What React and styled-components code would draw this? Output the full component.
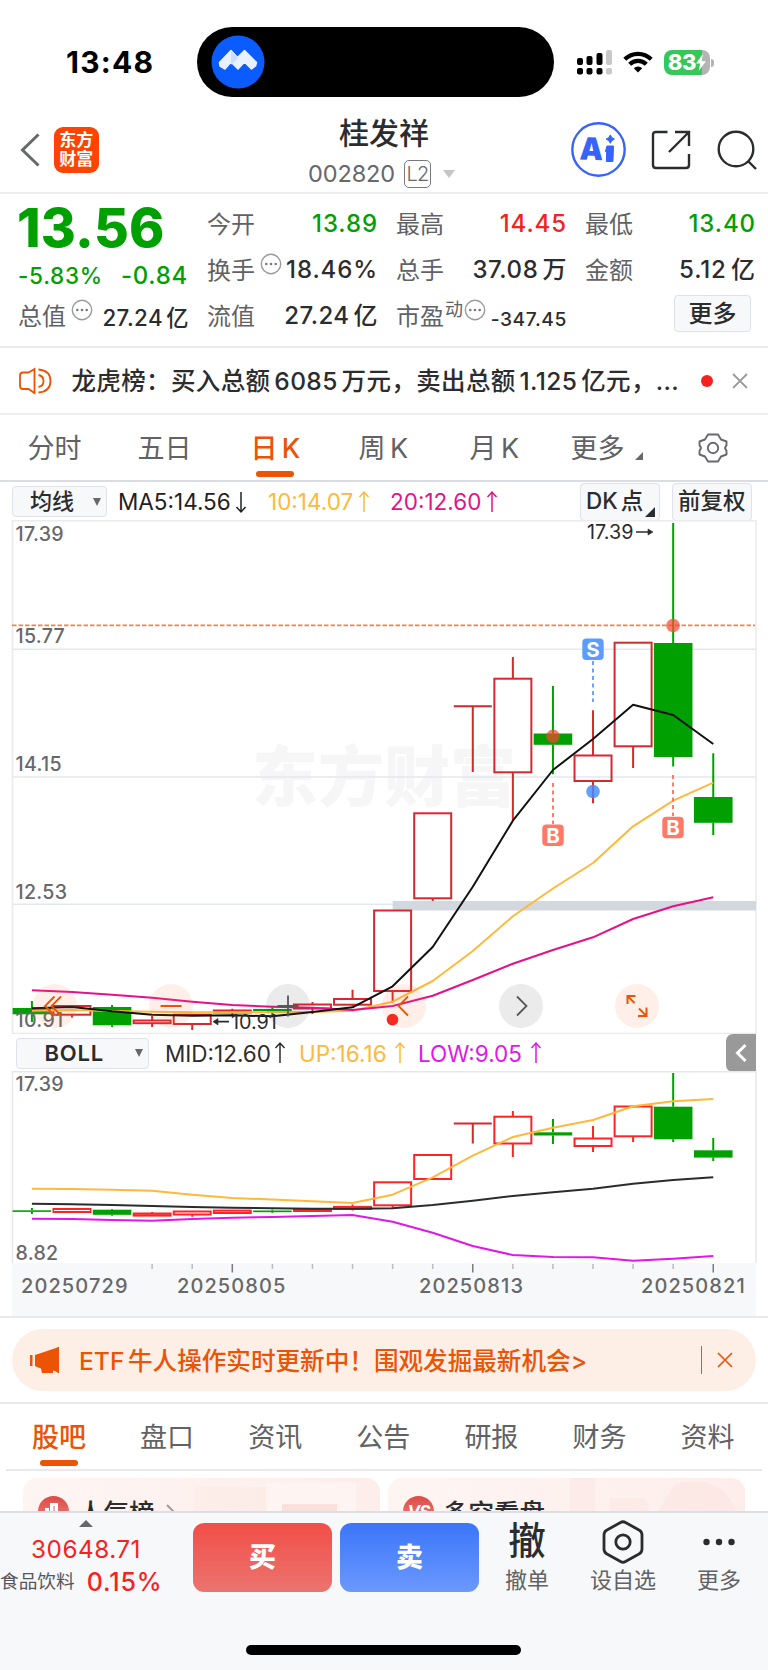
import styled, { createGlobalStyle } from 'styled-components'

const GlobalStyle = createGlobalStyle`
  * {
    box-sizing: border-box;
  }

  body {
    margin: 0;
    background: #fff;
    font-family: Inter, 'Noto Sans CJK SC', sans-serif;
    color: #2b2c2e;
  }
`

const GREEN = '#00a000'
const RED = '#f62222'
const ORANGE = '#ea5404'
const YELLOW = '#ffb83a'
const PINK = '#e4118a'
const PURPLE = '#e017e8'

const Screen = styled.div`
  width: 768px;
  height: 1670px;
  display: flex;
  flex-direction: column;
  overflow: hidden;
  background: #fff;
  word-spacing: -3px;
`

/* ---------- status bar ---------- */

const StatusBar = styled.div`
  height: 98px;
  flex: none;
  display: flex;
  align-items: center;
  padding: 26px 54px 0 66px;
`

const Clock = styled.div`
  width: 131px;
  font-size: 30px;
  font-weight: 700;
  letter-spacing: 1.2px;
  color: #000;
`

const Island = styled.div`
  width: 357px;
  height: 70px;
  border-radius: 35px;
  background: #000;
  padding: 8px 14px;
`

const StatusIcons = styled.div`
  display: flex;
  align-items: center;
  margin-left: 23px;
  gap: 11px;
`

const Battery = styled.div`
  display: flex;
  align-items: center;
  justify-content: center;
  width: 46px;
  height: 25px;
  border-radius: 8px;
  background: linear-gradient(to right, #34c759 83%, #b4b4b4 83%);
  color: #fff;
  font-size: 22px;
  font-weight: 800;
  letter-spacing: -0.3px;
  position: relative;

  &::after {
    content: '';
    position: absolute;
    right: -4px;
    top: 9px;
    width: 3px;
    height: 8px;
    border-radius: 0 3px 3px 0;
    background: #b4b4b4;
  }
`

/* ---------- header ---------- */

const Header = styled.header`
  height: 96px;
  flex: none;
  display: grid;
  grid-template-columns: 300px 168px 300px;
  border-bottom: 2px solid #ededef;
`

const HeaderLeft = styled.div`
  display: flex;
  align-items: center;
  padding: 9px 0 0 20px;
  gap: 13.5px;
`

const Logo = styled.div`
  width: 45.5px;
  height: 46px;
  border-radius: 9px;
  background: #ff4400;
  color: #fff;
  font-size: 17px;
  font-weight: 700;
  line-height: 19px;
  text-align: center;
  padding-top: 4px;
`

const Title = styled.div`
  padding-top: 14px;
  text-align: center;
  font-size: 30px;
  font-weight: 500;
  line-height: 42px;
  white-space: nowrap;
`

const Code = styled.div`
  display: flex;
  align-items: center;
  padding-left: 8px;
  height: 29px;
  margin-top: 5px;
  font-size: 23.5px;
  line-height: 29px;
  letter-spacing: -0.1px;
  color: #66686b;
`

const Level = styled.span`
  width: 27px;
  height: 28px;
  margin: 0 12px 0 9px;
  border: 1.5px solid #77797c;
  border-radius: 5px;
  font-size: 20px;
  line-height: 26px;
  text-align: center;
  font-weight: 300;
  letter-spacing: -0.8px;
`

const HeaderRight = styled.div`
  display: flex;
  align-items: center;
  justify-content: flex-end;
  padding: 9px 9px 0 0;
`

/* ---------- quote ---------- */

const Quote = styled.section`
  height: 154px;
  flex: none;
  display: grid;
  grid-template-columns: repeat(4, 170px);
  grid-template-rows: repeat(3, 46px);
  column-gap: 19px;
  padding: 6.5px 0 0 18px;
  border-bottom: 2px solid #e9eaee;
`

const Price = styled.div`
  margin-left: -1px;
  font-size: 53.5px;
  font-weight: 800;
  line-height: 53px;
  letter-spacing: 0.2px;
  color: ${GREEN};
`

const Change = styled.div`
  display: flex;
  align-items: center;
  justify-content: space-between;
  padding-top: 12px;
  font-weight: 500;
  font-size: 24px;
  letter-spacing: 0.7px;
  color: ${GREEN};

  span:first-child {
    font-size: 22.5px;
  }
`

const Stat = styled.div`
  display: flex;
  align-items: center;
  white-space: nowrap;
`

const StatLabel = styled.span`
  font-size: 24px;
  line-height: 34px;
  padding-top: 2px;
  color: #606265;
`

const StatValue = styled.span`
  margin-left: auto;
  margin-right: -1px;
  font-size: ${(p) => p.$size || 24}px;
  font-weight: 500;
  line-height: 34px;
  letter-spacing: ${(p) => p.$track || 0.9}px;
  padding-top: ${(p) => p.$drop || 1}px;
  color: ${(p) => p.$color || '#2b2c2e'};
`

const Dynamic = styled.span`
  font-size: 18px;
  color: #606265;
  margin: -16px -4px 0 1px;
`

const MoreButton = styled.button`
  width: 77px;
  height: 37px;
  margin-left: auto;
  margin-right: 4px;
  margin-top: -4px;
  padding: 0;
  border: 1.5px solid #dfe1e8;
  border-radius: 4px;
  background: #f7f8fa;
  font: 500 24px / 33px Inter, 'Noto Sans CJK SC', sans-serif;
  color: #2b2c2e;
`

/* ---------- news ---------- */

const News = styled.div`
  height: 67px;
  flex: none;
  display: flex;
  align-items: center;
  padding: 0 20px 0 19px;
  border-bottom: 2px solid #ededf0;
`

const NewsText = styled.div`
  width: 612px;
  flex: none;
  margin-left: 19.5px;
  padding-bottom: 2px;
  font-size: 24.5px;
  font-weight: 500;
  letter-spacing: 0.37px;
  white-space: nowrap;
`

const Dot = styled.i`
  width: 12px;
  height: 12px;
  margin-right: 19.5px;
  margin-left: auto;
  border-radius: 50%;
  background: ${RED};
`

const Close = styled.svg`
  flex: none;
`

/* ---------- tabs ---------- */

const PeriodTabs = styled.nav`
  height: 67px;
  flex: none;
  display: flex;
  padding-left: 27.5px;
  border-bottom: 2px solid #d9dce3;
`

const Tab = styled.div`
  width: ${(p) => p.$width}px;
  flex: none;
  display: flex;
  flex-direction: column;
  align-items: flex-start;
  font-size: 27px;
  line-height: 40px;
  font-weight: ${(p) => (p.$active ? 500 : 400)};
  color: ${(p) => (p.$active ? ORANGE : '#606265')};
  padding-top: ${(p) => p.$top}px;
  white-space: nowrap;

  span::after {
    content: '';
    display: ${(p) => (p.$active ? 'block' : 'none')};
    width: 38px;
    height: 6px;
    margin: ${(p) => p.$gap}px auto 0;
    border-radius: 3px;
    background: ${ORANGE};
  }
`

const TabCorner = styled.i`
  display: inline-block;
  margin-left: 10px;
  border-left: 8px solid transparent;
  border-bottom: 8px solid #66686b;
  transform: translateY(2px);
`

const GearSlot = styled.div`
  padding-top: 17px;
`

/* ---------- indicators ---------- */

const Indicators = styled.div`
  height: ${(p) => p.$height}px;
  flex: none;
  display: flex;
  align-items: center;
  padding: 1px ${(p) => p.$right}px 0 ${(p) => p.$left}px;
`

const Picker = styled.div`
  display: flex;
  align-items: center;
  justify-content: flex-end;
  width: ${(p) => p.$width}px;
  height: 31px;
  padding-right: 5px;
  gap: ${(p) => p.$gap}px;
  border: 1.5px solid #dfe2e8;
  border-radius: 4px;
  background: #f7f8fa;
  font-size: 22px;
  font-weight: ${(p) => p.$weight || 500};
  line-height: 29px;
  letter-spacing: ${(p) => p.$track || 0}px;
`

const Caret = styled.i`
  border: 4.5px solid transparent;
  border-top: 8px solid ${(p) => p.$color || '#66686b'};
  border-bottom: 0;
  border-left-width: ${(p) => p.$half || 4.5}px;
  border-right-width: ${(p) => p.$half || 4.5}px;
`

const Reading = styled.div`
  display: flex;
  align-items: center;
  width: ${(p) => p.$width}px;
  margin-left: ${(p) => p.$gap}px;
  flex: none;
  font-size: 22.5px;
  color: ${(p) => p.$color};

  svg {
    margin-left: auto;
  }
`

const SideButton = styled.div`
  position: relative;
  width: 80px;
  height: 38px;
  margin-left: ${(p) => p.$left};
  border: 1.5px solid #dfe2e8;
  border-radius: 4px;
  background: #f7f8fa;
  font-size: 22.5px;
  font-weight: 500;
  line-height: 34px;
  padding-left: 5px;
  white-space: nowrap;
`

const SideCorner = styled.i`
  position: absolute;
  right: 4px;
  bottom: 3px;
  border-left: 10px solid transparent;
  border-bottom: 10px solid #2b2c2e;
`

const Collapse = styled.div`
  width: 30px;
  height: 38px;
  margin-left: auto;
  border-radius: 7px 0 0 7px;
  background: #999;
  display: flex;
  align-items: center;
  justify-content: center;
`

/* ---------- charts ---------- */

const ChartArea = styled.div`
  position: relative;
  flex: none;
  height: ${(p) => p.$height}px;

  svg {
    display: block;
  }
`

const ChartControls = styled.div`
  position: absolute;
  left: 33px;
  top: 464px;
  display: flex;
  gap: 72.4px;
`

const RoundControl = styled.div`
  width: 44px;
  height: 44px;
  border-radius: 50%;
  background: ${(p) => (p.$gray ? 'rgba(60, 60, 60, 0.1)' : 'rgba(255, 110, 50, 0.11)')};
`

const Dates = styled.div`
  height: 53px;
  flex: none;
  margin: 0 12px;
  background: #f7f8fa;
`

const Divider = styled.div`
  height: 2px;
  flex: none;
  margin: 0 ${(p) => p.$inset || 0}px;
  background: #e8e9ed;
`

/* ---------- banner, lower tabs ---------- */

const Banner = styled.div`
  height: 62px;
  flex: none;
  margin: 11px 12px;
  padding: 0 23px 0 18px;
  border-radius: 31px;
  background: #fdeee6;
  color: ${ORANGE};
  display: flex;
  align-items: center;
`

const BannerText = styled.div`
  margin-left: 19px;
  padding-bottom: 3px;
  flex: 1;
  font-size: 24.6px;
  font-weight: 500;
  white-space: nowrap;
`

const BannerRule = styled.i`
  width: 1.5px;
  height: 28px;
  margin-right: 15px;
  background: ${ORANGE};
`

const InfoTabs = styled.nav`
  height: 65px;
  flex: none;
  display: flex;
  padding-left: 32px;
`

const Cards = styled.div`
  height: 40px;
  flex: none;
  overflow: hidden;
  display: flex;
  gap: 8px;
  padding: 7px 23px 0;
`

const Card = styled.div`
  width: 357px;
  height: 100px;
  border-radius: 14px;
  background: linear-gradient(to right, #fef5f2, #fdeeeb);
  overflow: hidden;
  display: flex;
  padding: 15px 0 0 15px;
  font-size: 25.5px;
  font-weight: 500;
  line-height: 40px;
  position: relative;
`

const CardIcon = styled.div`
  width: 31px;
  height: 31px;
  margin: 3px 9px 0 0;
  border-radius: 50%;
  background: linear-gradient(#dd4a45, #ec8b83);
  color: #fff;
  font-size: 17px;
  font-style: italic;
  font-weight: 700;
  line-height: 33px;
  text-align: center;
  letter-spacing: -1px;
`

const CardArt = styled.svg`
  position: absolute;
  right: 0;
  top: 0;
`

const CardArrow = styled.svg`
  margin: 10px 0 0 10px;
`

/* ---------- bottom bar ---------- */

const BottomBar = styled.footer`
  flex: 1;
  display: flex;
  align-items: flex-start;
  border-top: 2px solid #dcdee3;
  background: #f7f8fa;
  position: relative;
`

const Sector = styled.div`
  width: 172px;
  margin-right: 21px;
  display: flex;
  flex-direction: column;
  align-items: center;
  padding-top: 7px;
  color: ${RED};
  font-size: 24.3px;
  line-height: 30px;
  letter-spacing: 0.5px;
`

const SectorUp = styled.i`
  border: 7px solid transparent;
  border-bottom: 7px solid #66686b;
  border-top: 0;
  margin-bottom: 7px;
`

const SectorRow = styled.div`
  width: 172px;
  display: flex;
  align-items: center;
  margin-top: 3px;
  font-size: 25px;
  font-weight: 500;
  gap: 12px;
  letter-spacing: 0.8px;
  white-space: nowrap;

  span {
    font-size: 18.7px;
    font-weight: 400;
    letter-spacing: 0;
    color: #55575a;
  }
`

const TradeButton = styled.button`
  width: 139px;
  height: 69px;
  margin: 10px 8px 0 0;
  padding: 0;
  border: 0;
  border-radius: 11px;
  background: ${(p) => p.$bg};
  color: #fff;
  font: 900 27px / 67px Inter, 'Noto Sans CJK SC', sans-serif;
`

const Action = styled.div`
  width: ${(p) => p.$width}px;
  display: flex;
  flex-direction: column;
  align-items: center;
  font-size: 22px;
  line-height: 32px;
  color: #606265;
  white-space: nowrap;
`

const ActionIcon = styled.div`
  height: 51px;
  display: flex;
  align-items: center;
  padding-top: ${(p) => p.$top ?? 7}px;
  font-size: 37.5px;
  font-weight: 500;
  line-height: 44px;
  color: #2b2c2e;
`

const HomeIndicator = styled.div`
  position: absolute;
  left: 246px;
  bottom: 15px;
  width: 275px;
  height: 10px;
  border-radius: 5px;
  background: #000;
`

/* ---------- data ---------- */

const X0 = 31.9
const STEP = 40.08
const cx = (i) => X0 + STEP * i

// [kind, body top, body bottom, high, low] in chart pixels; kind: 0 down, 1 up, 2 T-shaped
const dayCandles = [
  [0, 1008, 1014.3, 1001, 1022],
  [1, 1006, 1014.7, 1005, 1017.5],
  [0, 1007, 1025.3, 1005, 1027],
  [1, 1020.5, 1023.2, 1016, 1027],
  [1, 1014.7, 1024, 1014, 1030],
  [1, 1010.5, 1012.5, 1008.7, 1015],
  [0, 1009, 1011, 1007.5, 1016],
  [1, 1004.5, 1008.5, 1002, 1014],
  [1, 999, 1004.7, 989.7, 1006],
  [1, 910.5, 991, 910.5, 1002.7],
  [1, 813.3, 898.3, 813.3, 901],
  [2, 706.3, 706.3, 706.3, 772],
  [1, 678.7, 772.3, 657, 820.7],
  [0, 733.5, 744.8, 686, 774.3],
  [1, 755.5, 781, 710.3, 803.3],
  [1, 642.7, 746.3, 642.7, 768],
  [0, 643, 757, 523, 766.5],
  [0, 797, 822.8, 753.3, 835],
]

const bollCandles = [
  [0, 1210.3, 1211.9, 1208, 1214],
  [1, 1209, 1212, 1209, 1212],
  [0, 1209.7, 1214.8, 1209, 1215.7],
  [1, 1213.5, 1215.6, 1212, 1216],
  [1, 1211.5, 1214.5, 1211, 1216.7],
  [1, 1210.6, 1213, 1210, 1213],
  [0, 1210.5, 1212.2, 1209.5, 1213],
  [1, 1209.5, 1211, 1209, 1211],
  [1, 1206.9, 1209, 1204.5, 1210.5],
  [1, 1182.3, 1205.3, 1182.3, 1207.7],
  [1, 1155, 1179, 1155, 1179],
  [2, 1123.5, 1123.5, 1123.5, 1143.5],
  [1, 1116.7, 1143.5, 1111, 1157],
  [0, 1132.3, 1135.5, 1119, 1144],
  [1, 1138.5, 1146, 1126, 1152],
  [1, 1106.5, 1136.3, 1106.5, 1142],
  [0, 1106.7, 1139.3, 1073, 1142],
  [0, 1150.3, 1157.6, 1138, 1161],
]

const ma5 = [1008.3, 1007, 1011.3, 1014.7, 1015.7, 1015.3, 1016.3, 1012, 1007.3, 986.3, 947, 886.7, 820.7, 770, 739, 704.7, 715, 744]
const ma10 = [1010.7, 1010, 1011, 1011.7, 1012.3, 1012.3, 1012, 1012, 1010.7, 1001.7, 981, 951, 916.3, 888.5, 863, 826.3, 800.7, 782.7]
const ma20 = [990.3, 992, 994.7, 997.7, 1001.7, 1005, 1006.7, 1007.7, 1010, 1006, 995.7, 980, 963.7, 950, 937.3, 919, 906.3, 897.3]

const bollUp = [1188.7, 1189, 1189.7, 1190.7, 1194.7, 1198, 1199.5, 1201.3, 1203, 1194.7, 1177.3, 1155.7, 1137, 1127.7, 1120, 1106.3, 1101.3, 1099]
const bollMid = [1203.7, 1204.3, 1205, 1206, 1207, 1207.8, 1208.3, 1208.7, 1208.7, 1208.3, 1205, 1200.7, 1196, 1192.3, 1188.7, 1183.7, 1180, 1177.3]
const bollLow = [1218.7, 1219, 1220, 1220.7, 1219, 1217.7, 1217, 1216, 1215, 1221.7, 1232.7, 1246, 1255, 1257, 1257.3, 1260.7, 1258.7, 1256]

const toPoints = (values) => values.map((y, i) => `${cx(i)},${y}`).join(' ')

/* ---------- pieces ---------- */

const Line = ({ values, color, width = 2 }) => (
  <polyline points={toPoints(values)} fill="none" stroke={color} strokeWidth={width} strokeLinejoin="round" />
)

const Candles = ({ data, red }) =>
  data.map(([kind, top, bottom, high, low], i) => {
    const x = cx(i)
    if (kind === 2) {
      return <path key={i} d={`M${x - 19} ${top}h38M${x} ${top}V${low}`} stroke="#cf2a2e" strokeWidth="2" />
    }
    const color = kind ? red : GREEN
    return (
      <g key={i} stroke={color} strokeWidth="2">
        <path d={`M${x} ${high}V${top}M${x} ${bottom}V${low}`} />
        {kind ? (
          <rect x={x - 18.5} y={top} width="37" height={bottom - top} fill="none" />
        ) : (
          <rect x={x - 19.3} y={top} width="38.6" height={bottom - top} fill={color} stroke="none" />
        )}
      </g>
    )
  })

const Marker = ({ x, y, label, color }) => (
  <g>
    <rect x={x - 10.7} y={y - 10.7} width="21.4" height="21.4" rx="4" fill={color} />
    <text x={x} y={y + 7.3} textAnchor="middle" fontSize="20.5" fontWeight="700" fill="#fff">{label}</text>
  </g>
)

const UpArrow = ({ down }) => (
  <svg width="12" height="24" viewBox="0 0 12 24" fill="none" stroke="currentColor" strokeWidth="1.5">
    <path d={down ? 'M6 2v20M1.5 17 6 22l4.5-5' : 'M6 22V2M1.5 7 6 2l4.5 5'} />
  </svg>
)

const InfoIcon = styled.svg`
  flex: none;
  margin: -11px 0 0 5px;
`

const Info = () => (
  <InfoIcon width="22" height="22" viewBox="0 0 22 22">
    <circle cx="11" cy="11" r="9.7" fill="none" stroke="#999b9e" strokeWidth="1.4" />
    <circle cx="6.3" cy="11" r="1.3" fill="#77797c" />
    <circle cx="11" cy="11" r="1.3" fill="#77797c" />
    <circle cx="15.7" cy="11" r="1.3" fill="#77797c" />
  </InfoIcon>
)

const Cross = ({ color, width = 1.8 }) => (
  <Close width="16" height="16" viewBox="0 0 16 16">
    <path d="M1 1l14 14M15 1 1 15" stroke={color} strokeWidth={width} />
  </Close>
)

const DayChart = () => (
  <ChartArea $height={514}>
    <svg width="768" height="514" viewBox="0 520 768 514">
      <text x="252" y="801" fontSize="66" fontWeight="900" fill="#f6f6f6">东方财富</text>
      <path d="M12 649.2h744M12 777h744M12 904.3h744" stroke="#e3e7ee" strokeWidth="1.5" />
      <rect x="12.5" y="520.7" width="743.5" height="512.8" fill="none" stroke="#ebebee" strokeWidth="1.6" />
      <rect x="392.7" y="901" width="363.3" height="9.5" fill="#d3d7de" />
      <path d="M12 625.3h743" stroke="#f0834a" strokeWidth="1.7" strokeDasharray="4.5 2" />
      <Candles data={dayCandles} red="#d6292d" />
      <Line values={ma10} color={YELLOW} />
      <Line values={ma20} color={PINK} />
      <Line values={ma5} color="#111" />
      <g fontSize="19.6" fontWeight="500" fill="#66686b" letterSpacing="0.3">
        <text x="15.5" y="541">17.39</text>
        <text x="15.5" y="643">15.77</text>
        <text x="15.5" y="771">14.15</text>
        <text x="15.5" y="899">12.53</text>
        <text x="15.5" y="1027">10.91</text>
      </g>
      <g fontSize="19.8" fill="#2b2c2e">
        <text x="587" y="539">17.39</text>
        <text x="231" y="1028.5">10.91</text>
      </g>
      <g stroke="#2b2c2e" strokeWidth="1.7" fill="#2b2c2e">
        <path d="M636 532h15M214 1021.7h15" />
        <path d="M648 529l5 3-5 3zM218 1018.5l-5 3.2 5 3.2z" strokeWidth="0.6" />
      </g>
      <g strokeWidth="1.8" strokeDasharray="4 3.5">
        <path d="M593 661v41" stroke="#5a9cfb" />
        <path d="M553 783v41M673 775v41" stroke="#ff6e5c" />
      </g>
      <circle cx="673" cy="625.5" r="6.8" fill="#ff4633" opacity=".72" />
      <circle cx="553" cy="736.3" r="6.8" fill="#f2462c" opacity=".72" />
      <circle cx="593" cy="791.5" r="6.8" fill="#3f8cff" opacity=".82" />
      <Marker x={593} y={649.3} label="S" color="#5c9dfb" />
      <Marker x={553} y={835.3} label="B" color="#ff7868" />
      <Marker x={673} y={827.5} label="B" color="#ff7868" />
      <circle cx="392.5" cy="1019.6" r="5.8" fill={RED} />
    </svg>
    <ChartControls>
      <RoundControl>
        <svg width="44" height="44" fill="none" stroke={ORANGE} strokeWidth="1.8"><path d="M21.5 12.5 12 22l9.5 9.5M28 12.5 18.5 22l9.5 9.5" /></svg>
      </RoundControl>
      <RoundControl>
        <svg width="44" height="44"><path d="M11.5 22h21" stroke={ORANGE} strokeWidth="2" /></svg>
      </RoundControl>
      <RoundControl $gray>
        <svg width="44" height="44"><path d="M11.5 22h21M22 11.5v21" stroke="#55575a" strokeWidth="1.8" /></svg>
      </RoundControl>
      <RoundControl>
        <svg width="44" height="44" fill="none" stroke={ORANGE} strokeWidth="1.8"><path d="M26 12.5 16.5 22l9.5 9.5" /></svg>
      </RoundControl>
      <RoundControl $gray>
        <svg width="44" height="44" fill="none" stroke="#55575a" strokeWidth="1.8"><path d="M18 12.5 27.5 22 18 31.5" /></svg>
      </RoundControl>
      <RoundControl>
        <svg width="44" height="44" fill="none" stroke={ORANGE} strokeWidth="2"><path d="M12.5 20v-8h8M12.5 12l7 7M31.5 23.5V32H23M31.5 32 24 24.5" /></svg>
      </RoundControl>
    </ChartControls>
  </ChartArea>
)

const BollChart = () => (
  <ChartArea $height={192}>
    <svg width="768" height="192" viewBox="0 1071 768 192">
      <path d="M12.5 1263v-191.3H756V1263" fill="none" stroke="#e6e8ec" strokeWidth="1.5" />
      <Candles data={bollCandles} red="#fb2525" />
      <Line values={bollUp} color={YELLOW} />
      <Line values={bollMid} color="#2b2c2e" />
      <Line values={bollLow} color={PURPLE} />
      <g fontSize="19.6" fontWeight="500" fill="#66686b" letterSpacing="0.3">
        <text x="15.5" y="1090.5">17.39</text>
        <text x="15.5" y="1259.5">8.82</text>
      </g>
    </svg>
  </ChartArea>
)

const bigTicks = [5, 11, 17]

const DateAxis = () => (
  <Dates>
    <svg width="744" height="53" viewBox="12 1263 744 53">
      {dayCandles.map((_, i) =>
        i < 3 ? null : (
          <path
            key={i}
            d={`M${cx(i)} 1264v${bigTicks.includes(i) ? 8.5 : 5}`}
            stroke={bigTicks.includes(i) ? '#77797c' : '#b9bbc0'}
            strokeWidth="1.5"
          />
        )
      )}
      <g fontSize="20" fontWeight="500" fill="#66686b" letterSpacing="1.1">
        <text x="21" y="1293">20250729</text>
        <text x="177" y="1293">20250805</text>
        <text x="419" y="1293">20250813</text>
        <text x="641" y="1293">20250821</text>
      </g>
    </svg>
  </Dates>
)

const periods = [
  ['分时', 110],
  ['五日', 113],
  ['日 K', 108],
  ['周 K', 111],
  ['月 K', 101],
]

const infoTabs = ['股吧', '盘口', '资讯', '公告', '研报', '财务', '资料']

const App = () => (
  <>
    <GlobalStyle />
    <Screen>
      <StatusBar>
        <Clock>13:48</Clock>
        <Island>
          <svg width="54" height="54" viewBox="0 0 54 54">
            <circle cx="27" cy="27" r="26.5" fill="#0a5cff" />
            <path d="M8.500 27.500 20 15.500l6.500 7L33.500 15.500 45.500 27.500l-1 3.500-4 3-7-7-6.500 7-7-7L14 34l-5-3z" fill="#e9f1ff" stroke="#e9f1ff" strokeWidth="1.5" strokeLinejoin="round" />
            <path d="M20 16 27 23 20 30z" fill="#b9d2ff" opacity=".6" />
          </svg>
        </Island>
        <StatusIcons>
          <svg width="35" height="25" viewBox="0 0 35 25">
            <rect x="0" y="8" width="6" height="7" rx="2" />
            <rect x="9.5" y="6" width="6" height="9" rx="2" />
            <rect x="19.5" y="3" width="6" height="12" rx="2" />
            <rect x="29" y="0" width="6" height="15" rx="2" fill="#c8c8c8" />
            <rect x="0" y="18" width="6" height="6.5" rx="2" />
            <rect x="9.5" y="18" width="6" height="6.5" rx="2" />
            <rect x="19.5" y="18" width="6" height="6.5" rx="2" />
            <rect x="29" y="18" width="6" height="6.5" rx="2" fill="#c8c8c8" />
          </svg>
          <svg width="30" height="24" viewBox="0 0 30 24" fill="none" stroke="#000" strokeWidth="4.2">
            <path d="M1.8 9.2a18.8 18.8 0 0 1 26.4 0" />
            <path d="M6.7 14.3a11.8 11.8 0 0 1 16.6 0" />
            <path d="M15 22.5l-4.2-4.2a6 6 0 0 1 8.4 0z" fill="#000" stroke="none" />
          </svg>
          <Battery>
            83
            <svg width="10" height="17" viewBox="0 0 11 19">
              <path d="M7.5 0 0 10.5h4.5L3 19l8-11H6.3z" fill="#fff" />
            </svg>
          </Battery>
        </StatusIcons>
      </StatusBar>

      <Header>
        <HeaderLeft>
          <svg width="20" height="34" viewBox="0 0 20 34">
            <path d="M18.5 1.5 2.5 17l16 15.5" fill="none" stroke="#66686b" strokeWidth="3" />
          </svg>
          <Logo>东方<br />财富</Logo>
        </HeaderLeft>
        <div>
          <Title>桂发祥</Title>
          <Code>
            002820
            <Level>L2</Level>
            <Caret $color="#c4c5c8" $half={6.5} />
          </Code>
        </div>
        <HeaderRight>
          <svg width="55" height="55" viewBox="0 0 55 55">
            <circle cx="27.5" cy="27.5" r="26.2" fill="none" stroke="#3763fb" strokeWidth="2.4" />
            <text x="9" y="38" fontSize="31" fontWeight="900" fill="#3763fb" transform="rotate(2 20 30) scale(.96 1)">A</text>
            <path d="M36 24h6.5l-.6 15.500h-6.500l.2-10h-1.200z" fill="#3763fb" stroke="#3763fb" strokeLinejoin="round" />
            <path d="M39.300 12.900q1 3.200 4.200 4.200-3.200 1-4.200 4.200-1-3.200-4.200-4.200 3.200-1 4.200-4.200z" fill="#3763fb" stroke="#3763fb" />
          </svg>
          <svg width="40" height="40" viewBox="0 0 40 40" fill="none" stroke="#2b2c2e" strokeWidth="2.4" style={{ marginLeft: 25 }}>
            <path d="M16.5 2H5Q2 2 2 5v30q0 3 3 3h30q3 0 3-3V24" />
            <path d="M24 2h14v14M37 3 18 22" />
          </svg>
          <svg width="42" height="40" viewBox="0 0 42 40" fill="none" stroke="#2b2c2e" strokeWidth="2.4" style={{ marginLeft: 26 }}>
            <circle cx="19" cy="19" r="17.3" />
            <path d="m31.5 31.5 7.5 7.5" />
          </svg>
        </HeaderRight>
      </Header>

      <Quote>
        <Price>13.56</Price>
        <Stat><StatLabel>今开</StatLabel><StatValue $color={GREEN}>13.89</StatValue></Stat>
        <Stat><StatLabel>最高</StatLabel><StatValue $color={RED}>14.45</StatValue></Stat>
        <Stat><StatLabel>最低</StatLabel><StatValue $color={GREEN}>13.40</StatValue></Stat>

        <Change><span>-5.83%</span><span>-0.84</span></Change>
        <Stat><StatLabel>换手</StatLabel><Info /><StatValue>18.46%</StatValue></Stat>
        <Stat><StatLabel>总手</StatLabel><StatValue $track={0.6}>37.08 万</StatValue></Stat>
        <Stat><StatLabel>金额</StatLabel><StatValue>5.12 亿</StatValue></Stat>

        <Stat><StatLabel>总值</StatLabel><Info /><StatValue $size={22.3} $track={0.4} $drop={4}>27.24 亿</StatValue></Stat>
        <Stat><StatLabel>流值</StatLabel><StatValue $track={0.5}>27.24 亿</StatValue></Stat>
        <Stat><StatLabel>市盈</StatLabel><Dynamic>动</Dynamic><Info /><StatValue $size={19.2} $track={0.6} $drop={6}>-347.45</StatValue></Stat>
        <Stat><MoreButton>更多</MoreButton></Stat>
      </Quote>

      <News>
        <svg width="33" height="28" viewBox="0 0 33 28" fill="none" stroke={ORANGE} strokeWidth="1.8">
          <path d="M4 5.5h5.5L15.5 2v24l-6-4H4Q1 22 1 19V8.5q0-3 3-3z" />
          <path d="M19.5 8q5 1 5 6t-5 6M19.5 2.5q12 1 12 11.5t-12 11.5" />
        </svg>
        <NewsText>龙虎榜：买入总额 6085 万元，卖出总额 1.125 亿元，...</NewsText>
        <Dot />
        <Cross color="#999b9e" />
      </News>

      <PeriodTabs>
        {periods.map(([label, width]) => (
          <Tab key={label} $width={width} $top={14} $gap={2} $active={label === '日 K'}>
            <span>{label}</span>
          </Tab>
        ))}
        <Tab $width={126} $top={14}>
          <span>更多<TabCorner /></span>
        </Tab>
        <GearSlot>
          <svg width="32" height="32" viewBox="0 0 32 32" fill="none" stroke="#66686b" strokeWidth="1.9">
            <path d="M11 2.5h10l3 5 5.5 2V13L28 16l1.500 3v3.500l-5.500 2-3 5H11l-3-5-5.500-2V19L4 16l-1.500-3V9.500L8 7.500z" strokeLinejoin="round" />
            <circle cx="16" cy="16" r="5.2" />
          </svg>
        </GearSlot>
      </PeriodTabs>

      <Indicators $height={38} $left={12} $right={16}>
        <Picker $width={95} $gap={19}>均线<Caret /></Picker>
        <Reading $width={129} $gap={11} $color="#1f2022">MA5:14.56<UpArrow down /></Reading>
        <Reading $width={102} $gap={21} $color={YELLOW}>10:14.07<UpArrow /></Reading>
        <Reading $width={108} $gap={20} $color={PINK}>20:12.60<UpArrow /></Reading>
        <SideButton $left="auto">DK 点<SideCorner /></SideButton>
        <SideButton $left="12px">前复权</SideButton>
      </Indicators>

      <DayChart />

      <Indicators $height={37} $left={16} $right={12}>
        <Picker $width={133} $gap={31} $weight={600} $track={0.8}>BOLL<Caret /></Picker>
        <Reading $width={121} $gap={16} $color="#2b2c2e">MID:12.60<UpArrow /></Reading>
        <Reading $width={107} $gap={13} $color={YELLOW}>UP:16.16<UpArrow /></Reading>
        <Reading $width={124} $gap={12} $color={PURPLE}>LOW:9.05<UpArrow /></Reading>
        <Collapse>
          <svg width="12" height="20" viewBox="0 0 12 20"><path d="m10.5 2-8 8 8 8" fill="none" stroke="#fff" strokeWidth="3" /></svg>
        </Collapse>
      </Indicators>

      <BollChart />
      <DateAxis />
      <Divider />

      <Banner>
        <svg width="30" height="26" viewBox="0 0 30 26" fill={ORANGE}>
          <path d="M0 8h2.5v11H0zM5 8 26 1l2-1h1v26h-1l-2-1.5-3-1V26H12l-1-4.500L7 20 5 19z" />
        </svg>
        <BannerText>ETF 牛人操作实时更新中！围观发掘最新机会&gt;</BannerText>
        <BannerRule />
        <Cross color={ORANGE} width={1.6} />
      </Banner>
      <Divider />

      <InfoTabs>
        {infoTabs.map((label) => (
          <Tab key={label} $width={108.1} $top={14} $gap={2} $active={label === '股吧'}>
            <span>{label}</span>
          </Tab>
        ))}
      </InfoTabs>
      <Divider $inset={6} />

      <Cards>
        <Card>
          <CardArt width="200" height="50">
            <rect x="14" y="9" width="74" height="41" fill="#fbe3df" opacity=".3" />
            <rect x="86" y="5" width="90" height="45" fill="#fff" opacity=".35" />
            <rect x="102" y="26" width="55" height="24" fill="#fae0dd" />
          </CardArt>
          <CardIcon>
            <svg width="17" height="17" viewBox="0 0 17 17" fill="#fff"><path d="M0 7h4v10H0zM5 2h8v15H9.500V5H8.500v12H5zM14 11h3v6h-3z" /></svg>
          </CardIcon>
          人气榜
          <CardArrow width="12" height="20" viewBox="0 0 12 20"><path d="m2 2 8 8-8 8" fill="none" stroke="#999" strokeWidth="1.8" /></CardArrow>
        </Card>
        <Card>
          <CardArt width="175" height="50" fill="#f9d5d1" opacity=".55">
            <rect width="25" height="50" opacity=".4" />
            <path d="M40 20h35l8 22 22-36q55-14 66 44H40z" opacity=".4" />
          </CardArt>
          <CardIcon>VS</CardIcon>
          多空看盘
        </Card>
      </Cards>

      <BottomBar>
        <Sector>
          <SectorUp />
          30648.71
          <SectorRow><span>食品饮料</span>0.15%</SectorRow>
        </Sector>
        <TradeButton $bg="linear-gradient(#f24e48, #eb746f)">买</TradeButton>
        <TradeButton $bg="linear-gradient(#3b76f9, #6b98fe)">卖</TradeButton>
        <Action $width={80}><ActionIcon $top={4}>撤</ActionIcon>撤单</Action>
        <Action $width={112}>
          <ActionIcon>
            <svg width="42" height="44" viewBox="0 0 42 44" fill="none" stroke="#2b2c2e" strokeWidth="2.8">
              <path d="M18.5 2.5q2.5-1.5 5 0L37 10q3 1.500 3 5v14q0 3.500-3 5l-13.500 7.500q-2.500 1.500-5 0L5 34q-3-1.500-3-5V15q0-3.500 3-5z" />
              <circle cx="21" cy="22" r="7.2" />
            </svg>
          </ActionIcon>
          设自选
        </Action>
        <Action $width={80}>
          <ActionIcon>
            <svg width="34" height="8" viewBox="0 0 34 8" fill="#2b2c2e">
              <circle cx="4.5" cy="4" r="3.2" />
              <circle cx="17" cy="4" r="3.2" />
              <circle cx="29.5" cy="4" r="3.2" />
            </svg>
          </ActionIcon>
          更多
        </Action>
        <HomeIndicator />
      </BottomBar>
    </Screen>
  </>
)

export default App
